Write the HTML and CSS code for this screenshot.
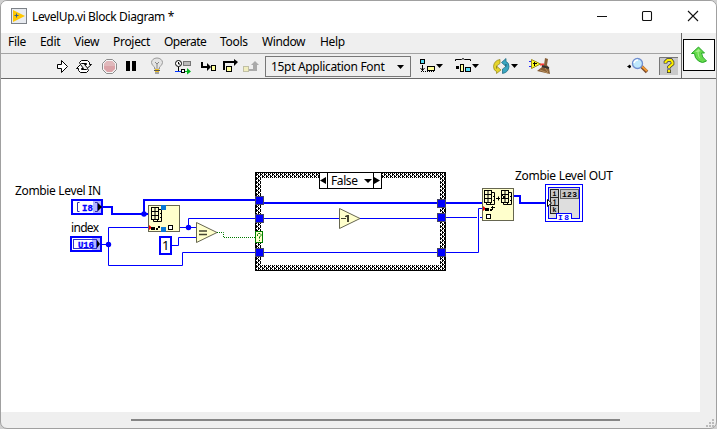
FILE: index.html
```html
<!DOCTYPE html>
<html lang="en">
<head>
<meta charset="utf-8">
<title>LevelUp.vi Block Diagram *</title>
<link rel="stylesheet" href="styles.css">
</head>
<body>
<div class="window">
  <header class="titlebar">
    <svg class="app-icon" width="16" height="16" viewBox="0 0 16 16"><rect x=".5" y=".5" width="15" height="15" fill="#e8ebf0" stroke="#7d8288"/><path d="M2 2v12l12-6z" fill="#ffc800"/><path d="M3.500 7.500h4M5.500 5.500v4" stroke="#376088"/></svg>
    <h1 class="title">LevelUp.vi Block Diagram *</h1>
    <svg class="controls" width="110" height="32" viewBox="590 0 110 32" fill="none" stroke="#111" stroke-width="1.100"><path d="M597 16.500h10M688 11l10 10M698 11l-10 10"/><rect x="642.500" y="11.500" width="9" height="9" rx="1"/></svg>
  </header>
  <div class="bars">
    <div class="bar-stack">
      <nav class="menu"><span class="m-file">File</span><span class="m-edit">Edit</span><span class="m-view">View</span><span class="m-project">Project</span><span class="m-operate">Operate</span><span class="m-tools">Tools</span><span class="m-window">Window</span><span class="m-help">Help</span></nav>
      <div class="toolbar">
        <svg width="22" height="24" viewBox="50 54 22 24"><path d="M57.500 64.500h4v-4l6 6-6 6v-4h-4z" fill="#fff" stroke="#000"/></svg>
        <svg width="26" height="24" viewBox="72 54 26 24" fill="#fff" stroke="#000"><path d="M79.500 62.500l2-2h6l2 2v2h2l-4 3.500-3-3.500h2v-1h-5l-1 1z"/><path d="M88.500 70.500l-2 2h-6l-2-2v-2h-2l4-4 3 4h-2v1h5l1-1z"/></svg>
        <svg width="23" height="24" viewBox="98 54 23 24"><path d="M106.500 59.500h6l4 4v6l-4 4h-6l-4-4v-6z" fill="#f4f4f4" stroke="#8c8c8c"/><path d="M107 61h5l3 3v5l-3 3h-5l-3-3v-5z" fill="#dba3a8"/><path d="M107 61h5l3 3v2h-11v-2z" fill="#e0b8bb"/></svg>
        <svg width="24" height="24" viewBox="121 54 24 24"><path d="M126 61h4v10h-4zM132 61h4v10h-4z"/></svg>
        <svg width="25" height="24" viewBox="145 54 25 24"><path d="M154.500 69v-2q-3-2-3-4.500a5.500 4.500 0 0 1 11 0q0 2.500-3 4.500v2z" fill="#e4e4e4" stroke="#999"/><path d="M155 62l2 2 2-2M157 64v4" stroke="#888" fill="none"/><path d="M155 69h4v3h-4z" fill="#eabc24"/><path d="M154 70.500h6M155 73h4" stroke="#555"/></svg>
        <svg width="27" height="24" viewBox="170 54 27 24"><circle cx="178.500" cy="63.500" r="3" fill="#fff" stroke="#000"/><path d="M178.500 62v2h1.500M178.500 67v5" stroke="#000" fill="none"/><rect x="183.500" y="61.500" width="7" height="4" fill="#bbb" stroke="#777"/><path d="M175 71.500h6" stroke="#03f"/><rect x="181.500" y="69.500" width="3" height="3" fill="#fff" stroke="#000"/><path d="M185 71h2v-3l4 3.500-4 3v-2.500h-2z" fill="#00b51d"/></svg>
        <svg width="23" height="24" viewBox="197 54 23 24"><path d="M201 62h2v4h4v-3l4 4-4 4v-3h-6z"/><rect x="211.500" y="65.500" width="4" height="5" fill="#ffff9c" stroke="#000"/></svg>
        <svg width="21" height="24" viewBox="220 54 21 24"><path d="M223 70v-9h11v-2l4 3-4 4v-3h-9v7z"/><rect x="226.500" y="66.500" width="5" height="5" fill="#ffff9c" stroke="#000"/></svg>
        <svg width="24" height="24" viewBox="241 54 24 24"><rect x="243.500" y="66.500" width="5" height="5" fill="#f1eebf" stroke="#c0bfa5"/><path d="M249 69h4v-4h-2l4-4 4 4h-2v6h-8z" fill="#aaa"/></svg>
        <div class="font-select"><span class="font-name">15pt Application Font</span><svg width="7" height="4" viewBox="0 0 7 4"><path d="M0 0h7L3.500 4z"/></svg></div>
        <svg width="39" height="24" viewBox="411 54 39 24"><rect x="420.500" y="59.500" width="4" height="4" fill="#55dcf5" stroke="#000"/><path d="M422.500 65v6M420.500 68l2 2.500 2-2.500" stroke="#000" fill="none"/><rect x="427.500" y="66.500" width="7" height="4" fill="#ffff9c" stroke="#000"/><path d="M421 71.500h14" stroke="#000" stroke-dasharray="1 1"/><path d="M436 64h7l-3.500 4z"/></svg>
        <svg width="38" height="24" viewBox="450 54 38 24"><path d="M455.500 61v-1.500h6l1.500-1 1.500 1h6V61" stroke="#000" fill="none"/><path d="M456 66h3v3h-3z"/><rect x="460.500" y="64.500" width="3" height="7" fill="#ffff9c" stroke="#000"/><rect x="465.500" y="67.500" width="5" height="4" fill="#55dcf5" stroke="#000"/><path d="M472 64h7l-3.500 4z"/></svg>
        <svg width="37" height="24" viewBox="488 54 37 24"><path d="M500 59.500q-6 1-6.500 7 0 4 3 5v2l4.500-3.500-4.500-4v2.500q-1-3 3.500-5z" fill="#e6d52b" stroke="#8c811a" stroke-width=".7"/><path d="M502.500 73.500q6-1 6.500-7 0-4-3-5v-3l-4.500 4 4.500 4v-2.500q1 3-3.500 5z" fill="#3aa6c0" stroke="#16617a" stroke-width=".7"/><path d="M511 64h7l-3.500 4z"/></svg>
        <svg width="30" height="24" viewBox="525 54 30 24"><path d="M529 61.500h3M529 66.500h3" stroke="#22f"/><path d="M540 64.500h4" stroke="#f33" stroke-width="2"/><path d="M545 58l3 1-1 6 2 3 1 6-13-3 5-4 2-2z" fill="#875f37"/><path d="M542 66l7 2" stroke="#333" stroke-width="2"/><path d="M540 70l8 3M545 68l3 4" stroke="#b9905e"/><path d="M531.500 59.500v9l9-4.500z" fill="#ff2" stroke="#998b20"/><path d="M533 63.500h4M534.500 62v4" stroke="#000"/></svg>
        <svg class="search" width="32" height="24" viewBox="620 54 32 24"><path d="M626 66.500l3-2v1h1v2h-1v1z"/><path d="M640 66l6 6" stroke="#7a4b2d" stroke-width="3.500"/><path d="M640.500 66l5.500 5" stroke="#f19a35" stroke-width="2"/><circle cx="636.500" cy="63.500" r="5" fill="#bfe8fc" stroke="#718fd0" stroke-width="1.300"/><path d="M633 63a4 4 0 0 1 4-3" stroke="#fff" stroke-width="1.500" fill="none"/></svg>
        <svg class="help" width="20" height="24" viewBox="658 54 20 24"><rect x="658" y="57" width="19" height="18" fill="#c9c9c9"/><path d="M658.500 75V57.500H677" fill="none" stroke="#777"/><path d="M664.500 63.500v-1.500l2-2h3.500l1.500 2v2l-3.500 3v1.500" fill="none" stroke="#333" stroke-width="3.600"/><path d="M664.500 63v-1l2-2h3.500l1.500 2v2l-3.500 3v1" fill="none" stroke="#fff000" stroke-width="2.200"/><path d="M666 69.500h4v3.500h-4z" fill="#333"/><path d="M666.700 70h2.500v2.300h-2.500z" fill="#fff000"/></svg>
      </div>
    </div>
    <div class="vi-pane"><svg width="32" height="32" viewBox="683 39 32 32"><rect x="683.500" y="39.500" width="31" height="31" fill="#fff" stroke="#000"/><path d="M691.500 53.500l7-6.500 6 6h-3q0 4 5 8-4 3-8 0-4-3-4-7.500z" fill="#66da4b" stroke="#27a829"/><path d="M695 52l3.500-3 2 2-2 1q0 4 2 7-3-2-3-7z" fill="#a2f08a"/></svg></div>
  </div>
  <main class="workspace">
    <svg class="diagram" width="699" height="333" viewBox="1 79 699 333">
      <defs>
        <pattern id="weave" width="4" height="4" patternUnits="userSpaceOnUse"><rect width="4" height="4" fill="#000"/><path d="M0 0h2v1H0zM1 1h1v1H1zM3 1h1v1H3zM2 2h2v1H2zM1 3h1v1H1zM3 3h1v1H3z" fill="#fff"/></pattern>
        <g id="grid"><path d="M2.500 2.500h8v12h-8zM9 6.500h2M9 10.500h2M6.500 13v2" fill="none" stroke="#000"/><rect x=".5" y=".5" width="7" height="12" fill="#ffffcc" stroke="#000"/><path d="M4 0v13M0 4.500h8M0 8.500h8" stroke="#000"/></g>
        <rect id="tunnel" x=".5" y=".5" width="8" height="8" fill="#00f" stroke="#444466"/>
      </defs>
      <g class="labels">
        <text x="15" y="195" textLength="86">Zombie Level IN</text>
        <text x="71" y="232" textLength="28">index</text>
        <text x="515" y="180" textLength="98">Zombie Level OUT</text>
      </g>
      <g fill="none" stroke="#00f">
        <path stroke-width="2" d="M103 207h9v7h36M144 214v-14h115M259 203h223M514 196h6v7h26"/>
        <path d="M102 244.500h6.500M149 227.500h-40.500v38h74v-13h296v-44h4M180 227.500h17M188.500 227v-8.500h70M259 218.500h182M441 217.500h36M480 217.500h2M172 245.500h6.500v-8h18.500"/>
      </g>
      <g fill="#00f"><circle cx="144" cy="214" r="2.700"/><circle cx="108.500" cy="244.500" r="2.700"/><circle cx="188.500" cy="227.500" r="2.700"/></g>
      <path d="M217 232.500h6.500v5h32" fill="none" stroke="#007a00" stroke-dasharray="1 1"/>

      <rect x="93" y="200" width="9" height="14" fill="#b3b3ff"/><rect x="72" y="200" width="30" height="14" fill="none" stroke="#00f" stroke-width="2"/><path d="M79.500 202.500h-2v9h2M95 202.500h2.500v9H95" fill="none" stroke="#33a"/><text class="type" x="82" y="210.500" textLength="11">I8</text><path d="M98 203l4 4-4 4z"/>
      <rect x="92" y="237" width="9" height="14" fill="#b3b3ff"/><rect x="71" y="237" width="30" height="14" fill="none" stroke="#00f" stroke-width="2"/><rect x="73.500" y="239.500" width="23" height="9" fill="none" stroke="#33c"/><text class="type" x="78" y="247.500" textLength="16">U16</text><path d="M97 240l3 4-3 4z"/>

      <rect x="148.500" y="205.500" width="31" height="26" fill="#ffffcc" stroke="#666650"/><use href="#grid" x="151" y="207"/><path d="M161 205h5v5h-5zM161 227h5v5h-5z" fill="#0878d8"/><path d="M149 225l3 2.500-3 2.500z" fill="#e00"/><path d="M151 227h4v3h-4zM156 228h2v2h-2zM158 226h2v2h-2z"/><rect x="168.500" y="225.500" width="4" height="4" fill="#fff" stroke="#000"/>
      <rect x="160" y="237" width="11" height="17" fill="#fff" stroke="#00f" stroke-width="2"/><text class="number" x="162" y="250">1</text>
      <path d="M196.500 222.500v20l20.500-10z" fill="#ffffcc" stroke="#666650"/><path d="M199 231h8M199 234.500h8" stroke="#444430" stroke-width="1.500"/>

      <path fill-rule="evenodd" fill="url(#weave)" d="M255 172h191v99H255zM261 178v87h179v-87z"/><rect x="255.500" y="172.500" width="190" height="98" fill="none" stroke="#000"/>
      <rect x="319.500" y="172.500" width="62" height="16" fill="#fff" stroke="#000"/><path d="M327.500 172v17M373.500 172v17" stroke="#000"/><path d="M326 177v7l-6-3.500zM374 177v7l6-3.500zM364 179h8l-4 4z"/><text x="331" y="185" textLength="27">False</text>
      <use href="#tunnel" x="255" y="196"/><use href="#tunnel" x="255" y="214"/><use href="#tunnel" x="255" y="248"/><use href="#tunnel" x="437" y="199"/><use href="#tunnel" x="437" y="213"/><use href="#tunnel" x="437" y="248"/>
      <rect x="255.500" y="231.500" width="7" height="11" fill="#ffffcc" stroke="#008000"/><path d="M257.500 236v-1.500l1-1h1.500l1 1v1l-1.500 1.500v1.500M259.500 240v1" fill="none" stroke="#008000"/>
      <path d="M339.500 208.500v20l20.500-10z" fill="#ffffcc" stroke="#666650"/><path d="M341 218.500h5" stroke="#444430"/><path d="M345 216l2-1h2v7h-2v-5h-2z" fill="#444430"/>

      <rect x="482.500" y="188.500" width="31" height="32" fill="#ffffcc" stroke="#666650"/><use href="#grid" x="484" y="190"/><use href="#grid" x="501" y="190"/><path d="M496 198.500h4M498.500 196.500v4" stroke="#000"/><path d="M501 194h2v2h-2zM503 196h2v2h-2zM503 194h1v1h-1z"/><path d="M483 206l3 2.500-3 2.500z" fill="#e00"/><path d="M485 208h4v3h-4zM490 209h2v2h-2zM492 206h1v4h-1zM491 207h4v1h-4z"/><rect x="486.500" y="214.500" width="4" height="4" fill="#fff" stroke="#000"/>

      <rect x="545.500" y="184.500" width="37" height="37" fill="#fff" stroke="#00f"/><rect x="548.500" y="187.500" width="31" height="31" fill="#dedede" stroke="#00f"/>
      <g fill="#c6c6c6" stroke="#222"><rect x="550.500" y="189.500" width="8" height="8"/><rect x="550.500" y="197.500" width="8" height="8"/><rect x="550.500" y="205.500" width="8" height="8"/><rect x="560.500" y="189.500" width="18" height="9" stroke="#666"/></g>
      <g class="index"><text x="552.500" y="196">i</text><text x="552.500" y="204">j</text><text x="552.500" y="212">k</text><text class="sample" x="562" y="197" textLength="15">123</text></g>
      <path d="M557 214h14v7h-14z" fill="#fff"/><path d="M556.500 219v-5.500h15v5.500" fill="none" stroke="#00f"/><text class="type small" x="558" y="220" textLength="11">I8</text><path d="M547.500 199.500v7l4-3.500z" fill="#fff" stroke="#000"/>
    </svg>
    <div class="scroll-y"></div>
  </main>
  <footer class="scroll-x"><div class="thumb"></div><svg class="grip" width="9" height="9" viewBox="0 0 9 9"><path d="M6 0h2v2H6zM3 3h2v2H3zM6 3h2v2H6zM0 6h2v2H0zM3 6h2v2H3zM6 6h2v2H6z" fill="#bbb"/></svg></footer>
</div>
</body>
</html>
```
FILE: styles.css
```css
* { box-sizing: border-box; }
body { margin: 0; background: #d0d0d0; font: 12px "Noto Sans", "Open Sans", sans-serif; color: #000; overflow: hidden; }
svg { display: block; flex: none; }
.window { width: 717px; height: 429px; border: 1px solid #a0a0a0; border-radius: 7px; background: #efefef; overflow: hidden; display: flex; flex-direction: column; }
.titlebar { height: 32px; flex: none; display: flex; align-items: flex-start; padding-left: 10px; background: #fff; }
.app-icon { margin-top: 7px; }
.title { margin: 0 0 0 5px; font-size: 12px; font-weight: 400; line-height: 31px; letter-spacing: -.4px; white-space: nowrap; }
.controls { margin: -1px 16px 0 auto; }
.bars { height: 46px; flex: none; display: flex; border-bottom: 1px solid #686868; }
.bar-stack { width: 680px; }
.menu { height: 21px; display: grid; grid-template-columns: 32px 34px 39px 51px 56px 42px 58px 40px; padding-left: 7px; line-height: 18px; letter-spacing: -.3px; border-bottom: 1px solid #a3a3a3; }
.m-operate { letter-spacing: -.55px; }
.m-window { letter-spacing: -.4px; }
.toolbar { height: 24px; display: flex; padding-left: 49px; }
.font-select { width: 146px; height: 21px; margin-top: 2px; padding: 0 6px 0 5px; border: 1px solid #777; display: flex; align-items: center; justify-content: space-between; line-height: 18px; letter-spacing: -.32px; white-space: nowrap; flex: none; }
.search { margin-left: auto; }
.help { margin: 0 2px 0 6px; }
.vi-pane { flex: 1; border-left: 1px solid #686868; padding: 6px 0 0 1px; }
.workspace { height: 333px; flex: none; display: flex; background: #fff; }
.scroll-y { flex: 1; background: #efefef; }
.diagram text { font-size: 12px; fill: #000; }
.diagram .type { font: bold 9px "Liberation Mono", monospace; fill: #00f; stroke: #00f; stroke-width: .3px; }
.diagram .type.small { font-size: 8px; stroke: none; }
.diagram .number { font-size: 13px; }
.diagram .index text { font: bold 6.5px "Liberation Mono", monospace; }
.diagram .index .sample { font-size: 8px; }
.scroll-x { flex: 1; display: flex; }
.thumb { width: 489px; height: 2px; margin: 7px 0 0 130px; background: #858585; }
.grip { margin: 7px 1px 0 auto; }
```
